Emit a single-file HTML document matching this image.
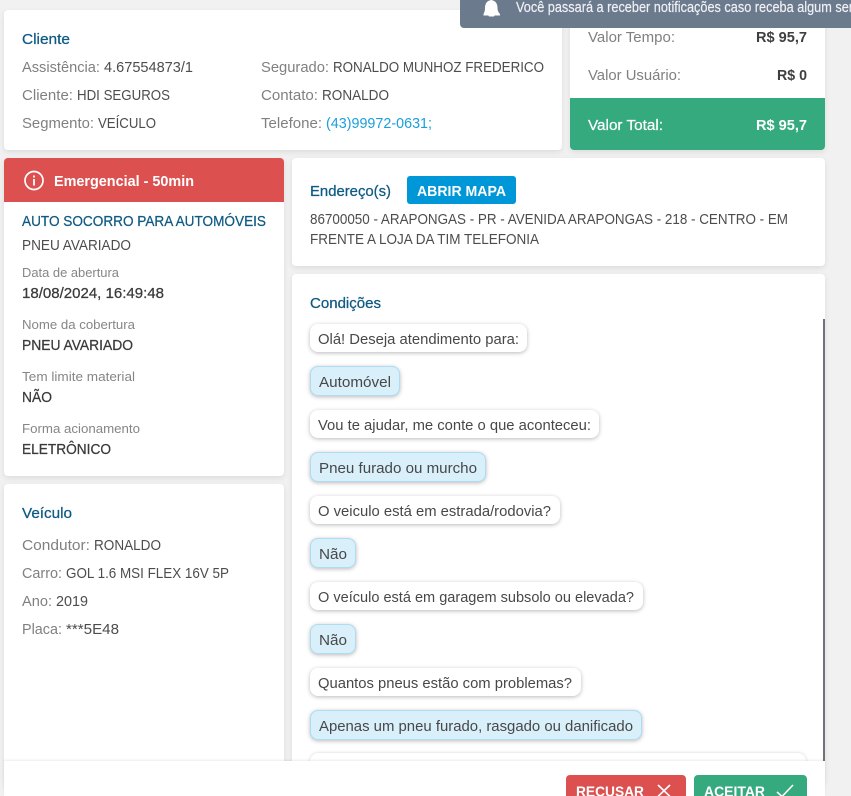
<!DOCTYPE html>
<html lang="pt-BR">
<head>
<meta charset="utf-8">
<title>Serviço</title>
<style>
html,body{margin:0;padding:0;width:851px;height:796px;overflow:hidden;background:#f1f1f1;font-family:"Liberation Sans",sans-serif}
#p{position:relative;width:851px;height:796px;overflow:hidden;background:#f1f1f1}
.b{position:absolute;box-sizing:border-box;background:#fff;border-radius:4px;box-shadow:0 2px 6px rgba(0,0,0,.09)}
.q{position:absolute;box-sizing:border-box;left:310px;height:28px;background:#fff;border-radius:8px;box-shadow:0 1px 4px rgba(0,0,0,.28)}
.a{position:absolute;box-sizing:border-box;left:310px;height:30px;background:#d9eff9;border:1px solid #aedcf2;border-radius:8px;box-shadow:0 1px 4px rgba(0,0,0,.28)}
svg{position:absolute;left:0;top:0}
text{font-family:"Liberation Sans",sans-serif;font-size:14.7px;fill:#4d4d4d}
.l{fill:#808080}
.t{fill:#0f5a84;font-weight:400;stroke:#0f5a84;stroke-width:.25px}
.s{font-size:13.2px;fill:#868686}
.v{fill:#3a3a3a;stroke:#3a3a3a;stroke-width:.25px}
.w{fill:#fff;font-weight:700}
.x{fill:#3f3f3f;font-weight:700}
.c{fill:#47484a}
</style>
</head>
<body>
<div id="p">
<div class="b" style="left:4px;top:10px;width:558px;height:140px"></div>
<div class="b" style="left:570px;top:0;width:255px;height:150px;overflow:hidden"><div style="position:absolute;left:0;top:98px;width:255px;height:52px;background:#36aa7f"></div></div>
<div class="b" style="left:4px;top:158px;width:280px;height:318px;overflow:hidden"><div style="position:absolute;left:0;top:0;width:280px;height:44px;background:#dc5050"></div></div>
<div class="b" style="left:4px;top:484px;width:280px;height:300px"></div>
<div class="b" style="left:292px;top:158px;width:533px;height:108px"></div>
<div class="b" style="left:292px;top:274px;width:533px;height:510px"></div>
<div style="position:absolute;left:823px;top:319px;width:2px;height:442px;background:#6f7378"></div>
<div style="position:absolute;left:407px;top:176px;width:109px;height:28px;background:#0097d8;border-radius:3px"></div>
<div class="q" style="top:324px;width:217px"></div>
<div class="a" style="top:366px;width:90px"></div>
<div class="q" style="top:410px;width:289px"></div>
<div class="a" style="top:452px;width:176px"></div>
<div class="q" style="top:496px;width:250px"></div>
<div class="a" style="top:538px;width:46px"></div>
<div class="q" style="top:582px;width:333px"></div>
<div class="a" style="top:624px;width:46px"></div>
<div class="q" style="top:668px;width:271px"></div>
<div class="a" style="top:710px;width:332px"></div>
<div class="q" style="top:753px;width:496px;box-shadow:0 0 3px rgba(0,0,0,.18)"></div>
<div style="position:absolute;left:4px;top:761px;width:821px;height:35px;background:#fff;box-shadow:0 -1px 2px rgba(0,0,0,.08)"></div>
<div style="position:absolute;left:566px;top:775px;width:120px;height:21px;background:#dc5050;border-radius:4px 4px 0 0"></div>
<div style="position:absolute;left:694px;top:775px;width:113px;height:21px;background:#36aa7f;border-radius:4px 4px 0 0"></div>
<div style="position:absolute;left:460px;top:0;width:391px;height:28px;background:#6c7a8e;border-radius:0 0 0 4px"></div>
<svg width="851" height="796" viewBox="0 0 851 796" xmlns="http://www.w3.org/2000/svg">
<g>
<text class="t" x="22" y="44" textLength="48" lengthAdjust="spacingAndGlyphs">Cliente</text>
<text class="l" x="22" y="72" textLength="78" lengthAdjust="spacingAndGlyphs">Assistência:</text>
<text x="104" y="72" textLength="89" lengthAdjust="spacingAndGlyphs">4.67554873/1</text>
<text class="l" x="22" y="100" textLength="51" lengthAdjust="spacingAndGlyphs">Cliente:</text>
<text x="77" y="100" textLength="93" lengthAdjust="spacingAndGlyphs">HDI SEGUROS</text>
<text class="l" x="22" y="128" textLength="72" lengthAdjust="spacingAndGlyphs">Segmento:</text>
<text x="98" y="128" textLength="58" lengthAdjust="spacingAndGlyphs">VEÍCULO</text>
<text class="l" x="261" y="72" textLength="68" lengthAdjust="spacingAndGlyphs">Segurado:</text>
<text x="333" y="72" textLength="211" lengthAdjust="spacingAndGlyphs">RONALDO MUNHOZ FREDERICO</text>
<text class="l" x="261" y="100" textLength="57" lengthAdjust="spacingAndGlyphs">Contato:</text>
<text x="322" y="100" textLength="67" lengthAdjust="spacingAndGlyphs">RONALDO</text>
<text class="l" x="261" y="128" textLength="61" lengthAdjust="spacingAndGlyphs">Telefone:</text>
<text x="326" y="128" textLength="106" lengthAdjust="spacingAndGlyphs" style="fill:#1b9fdc">(43)99972-0631;</text>

<text class="l" x="588" y="42" textLength="87" lengthAdjust="spacingAndGlyphs">Valor Tempo:</text>
<text class="x" x="756" y="42" textLength="51" lengthAdjust="spacingAndGlyphs">R$ 95,7</text>
<text class="l" x="588" y="80" textLength="93" lengthAdjust="spacingAndGlyphs">Valor Usuário:</text>
<text class="x" x="777" y="80" textLength="30" lengthAdjust="spacingAndGlyphs">R$ 0</text>
<text x="588" y="130" textLength="75" lengthAdjust="spacingAndGlyphs" style="fill:#fff;stroke:#fff;stroke-width:.2px">Valor Total:</text>
<text class="w" x="756" y="130" textLength="51" lengthAdjust="spacingAndGlyphs">R$ 95,7</text>

<circle cx="34" cy="180.5" r="9" fill="none" stroke="#fff" stroke-width="1.7"/>
<rect x="33.1" y="179" width="1.8" height="6.5" fill="#fff"/>
<rect x="33.1" y="175.5" width="1.8" height="2" fill="#fff"/>
<text class="w" x="54" y="186" textLength="140" lengthAdjust="spacingAndGlyphs">Emergencial - 50min</text>

<text class="t" x="22" y="226" textLength="244" lengthAdjust="spacingAndGlyphs">AUTO SOCORRO PARA AUTOMÓVEIS</text>
<text x="22" y="250" textLength="109" lengthAdjust="spacingAndGlyphs">PNEU AVARIADO</text>
<text class="s" x="22" y="277" textLength="97" lengthAdjust="spacingAndGlyphs">Data de abertura</text>
<text class="v" x="22" y="298" textLength="142" lengthAdjust="spacingAndGlyphs">18/08/2024, 16:49:48</text>
<text class="s" x="22" y="329" textLength="113" lengthAdjust="spacingAndGlyphs">Nome da cobertura</text>
<text class="v" x="22" y="350" textLength="111" lengthAdjust="spacingAndGlyphs">PNEU AVARIADO</text>
<text class="s" x="22" y="381" textLength="113" lengthAdjust="spacingAndGlyphs">Tem limite material</text>
<text class="v" x="22" y="402" textLength="30" lengthAdjust="spacingAndGlyphs">NÃO</text>
<text class="s" x="22" y="433" textLength="118" lengthAdjust="spacingAndGlyphs">Forma acionamento</text>
<text class="v" x="22" y="454" textLength="89" lengthAdjust="spacingAndGlyphs">ELETRÔNICO</text>

<text class="t" x="22" y="518" textLength="50" lengthAdjust="spacingAndGlyphs">Veículo</text>
<text class="l" x="22" y="550" textLength="68" lengthAdjust="spacingAndGlyphs">Condutor:</text>
<text x="94" y="550" textLength="67" lengthAdjust="spacingAndGlyphs">RONALDO</text>
<text class="l" x="22" y="578" textLength="40" lengthAdjust="spacingAndGlyphs">Carro:</text>
<text x="66" y="578" textLength="163" lengthAdjust="spacingAndGlyphs">GOL 1.6 MSI FLEX 16V 5P</text>
<text class="l" x="22" y="606" textLength="30" lengthAdjust="spacingAndGlyphs">Ano:</text>
<text x="56" y="606" textLength="32" lengthAdjust="spacingAndGlyphs">2019</text>
<text class="l" x="22" y="634" textLength="40" lengthAdjust="spacingAndGlyphs">Placa:</text>
<text x="66" y="634" textLength="53" lengthAdjust="spacingAndGlyphs">***5E48</text>

<text class="t" x="310" y="196" textLength="81" lengthAdjust="spacingAndGlyphs">Endereço(s)</text>
<text class="w" x="417" y="196" textLength="89" lengthAdjust="spacingAndGlyphs">ABRIR MAPA</text>
<text x="310" y="224" textLength="478" lengthAdjust="spacingAndGlyphs">86700050 - ARAPONGAS - PR - AVENIDA ARAPONGAS - 218 - CENTRO - EM</text>
<text x="310" y="244" textLength="229" lengthAdjust="spacingAndGlyphs">FRENTE A LOJA DA TIM TELEFONIA</text>

<text class="t" x="310" y="308" textLength="71" lengthAdjust="spacingAndGlyphs">Condições</text>
<text class="c" x="318" y="344" textLength="201" lengthAdjust="spacingAndGlyphs">Olá! Deseja atendimento para:</text>
<text class="c" x="319" y="387" textLength="72" lengthAdjust="spacingAndGlyphs">Automóvel</text>
<text class="c" x="318" y="430" textLength="273" lengthAdjust="spacingAndGlyphs">Vou te ajudar, me conte o que aconteceu:</text>
<text class="c" x="319" y="473" textLength="158" lengthAdjust="spacingAndGlyphs">Pneu furado ou murcho</text>
<text class="c" x="318" y="516" textLength="233" lengthAdjust="spacingAndGlyphs">O veiculo está em estrada/rodovia?</text>
<text class="c" x="319" y="559" textLength="28" lengthAdjust="spacingAndGlyphs">Não</text>
<text class="c" x="318" y="602" textLength="316" lengthAdjust="spacingAndGlyphs">O veículo está em garagem subsolo ou elevada?</text>
<text class="c" x="319" y="645" textLength="28" lengthAdjust="spacingAndGlyphs">Não</text>
<text class="c" x="318" y="688" textLength="254" lengthAdjust="spacingAndGlyphs">Quantos pneus estão com problemas?</text>
<text class="c" x="319" y="731" textLength="314" lengthAdjust="spacingAndGlyphs">Apenas um pneu furado, rasgado ou danificado</text>

<text class="w" x="576" y="796.5" textLength="68" lengthAdjust="spacingAndGlyphs">RECUSAR</text>
<path d="M658 785 L670 796.5 M670 785 L658 796.5" stroke="#fff" stroke-width="1.6" fill="none"/>
<text class="w" x="704" y="796.5" textLength="61" lengthAdjust="spacingAndGlyphs">ACEITAR</text>
<path d="M777 792 L782 796.5 L793 785" stroke="#fff" stroke-width="1.6" fill="none"/>

<path d="M491 0 C486.5 1 485 4 485 8 C485 11 484 13 483.5 14 L483.5 15.5 L500 15.5 L500 14 C499 13 497.5 11 497.5 8 C497.5 4 496 1 491.5 0 Z" fill="#fff"/>
<rect x="488.5" y="14" width="6" height="2.5" rx="1" fill="#fff"/>
<text x="516" y="12" textLength="337" lengthAdjust="spacingAndGlyphs" style="fill:#eef1f4;stroke:#eef1f4;stroke-width:.2px">Você passará a receber notificações caso receba algum ser</text>
</g>
</svg>
</div>
</body>
</html>
